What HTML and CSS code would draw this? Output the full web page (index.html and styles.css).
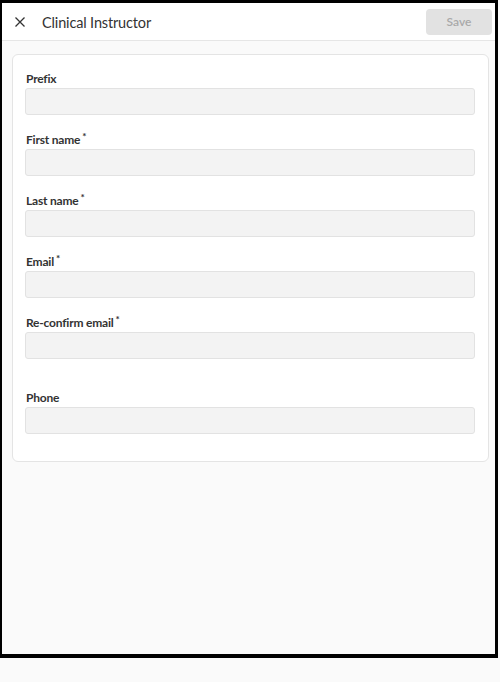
FILE: index.html
```html
<!DOCTYPE html>
<html>
<head>
<meta charset="utf-8">
<link rel="stylesheet" href="styles.css">
</head>
<body>
<div class="frame">
  <header class="bar">
    <button class="close" aria-label="Close">
      <svg width="12" height="12" viewBox="0 0 12 12"><path d="M1.5 1.5L10.5 10.5M10.5 1.5L1.5 10.5" stroke="#333" stroke-width="1.3" fill="none"/></svg>
    </button>
    <h1 class="title">Clinical Instructor</h1>
    <button class="save" disabled>Save</button>
  </header>
  <main class="content">
    <form class="card">
      <div class="field">
        <label class="label">Prefix</label>
        <div class="input"></div>
      </div>
      <div class="field">
        <label class="label">First name<sup class="req">*</sup></label>
        <div class="input"></div>
      </div>
      <div class="field">
        <label class="label">Last name<sup class="req">*</sup></label>
        <div class="input"></div>
      </div>
      <div class="field">
        <label class="label">Email<sup class="req">*</sup></label>
        <div class="input"></div>
      </div>
      <div class="field">
        <label class="label">Re-confirm email<sup class="req">*</sup></label>
        <div class="input"></div>
      </div>
      <div class="field phone">
        <label class="label">Phone</label>
        <div class="input"></div>
      </div>
    </form>
  </main>
</div>
</body>
</html>
```
FILE: styles.css
```css
* { box-sizing: border-box; }
html, body { margin: 0; padding: 0; }
body {
  background: #fafafa;
  font-family: Lato, "Open Sans", sans-serif;
  color: #333;
  width: 500px;
  height: 682px;
  overflow: hidden;
}
.frame {
  width: 498px;
  height: 658px;
  border-style: solid;
  border-color: #000;
  border-width: 3px 3px 4px 2px;
  background: #fafafa;
  display: flex;
  flex-direction: column;
}
.bar {
  height: 38px;
  background: #fff;
  border-bottom: 1px solid #e6e6e6;
  display: flex;
  align-items: center;
  padding: 0 3px 0 11px;
}
.close {
  border: 0;
  background: none;
  padding: 0;
  width: 13px;
  height: 14px;
  display: flex;
  align-items: center;
  justify-content: center;
}
.title {
  margin: 2px 0 0 16px;
  font-size: 14.5px;
  font-weight: 400;
  color: #333;
  flex: 1;
  letter-spacing: -0.15px;
}
.save {
  width: 66px;
  height: 26px;
  border: 0;
  border-radius: 4px;
  background: #e2e2e2;
  color: #a9a9a9;
  font-family: inherit;
  font-size: 12px;
  font-weight: 600;
}
.content {
  flex: 1;
  padding: 13px 6px 0 10px;
}
.card {
  background: #fff;
  border: 1px solid #e4e4e4;
  border-radius: 6px;
  padding: 15px 13px 27px 12px;
  margin: 0;
}
.field { margin-bottom: 16px; }
.field:last-child { margin-bottom: 0; }
.field.phone { margin-top: 30px; }
.label {
  display: block;
  font-size: 12px;
  font-weight: 700;
  line-height: 16px;
  height: 16px;
  margin-bottom: 2px;
  padding: 1px 0 0 1px;
  color: #333;
  letter-spacing: -0.2px;
}
.req {
  font-size: 10px;
  font-weight: 700;
  vertical-align: top;
  position: relative;
  top: -1px;
  left: 2px;
  line-height: 1;
}
.input {
  height: 27px;
  background: #f3f3f3;
  border: 1px solid #e2e2e2;
  border-radius: 3px;
}
```
